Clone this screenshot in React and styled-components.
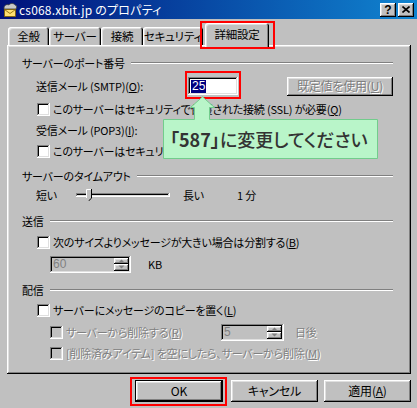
import React from "react";
import styled, { createGlobalStyle } from "styled-components";

const FONT = `"Noto Sans CJK JP", "Liberation Sans", sans-serif`;

const Global = createGlobalStyle`
  html, body { margin: 0; padding: 0; background: #c0c0c0; }
  body { font-family: ${FONT}; }
  * { box-sizing: border-box; }
`;

const raised = `
  box-shadow: inset -1px -1px #000, inset 1px 1px #fff, inset -2px -2px #808080, inset 2px 2px #dfdfdf;
`;
const sunken = `
  box-shadow: inset -1px -1px #fff, inset 1px 1px #808080, inset -2px -2px #dfdfdf, inset 2px 2px #000;
`;

const Win = styled.div`
  position: relative;
  width: 417px;
  height: 408px;
  background: #c0c0c0;
  font-family: ${FONT};
  font-size: 11px;
  letter-spacing: -0.2px;
  font-feature-settings: "palt";
  color: #000;
  overflow: hidden;
  display: flex;
  flex-direction: column;
`;

const TitleBar = styled.div`
  height: 19px;
  flex: none;
  background: linear-gradient(to right, #00107a, #1084d0);
  display: flex;
  align-items: center;
  padding: 0 3px 0 2px;
  color: #fff;
`;

const TitleText = styled.div`
  flex: 1;
  margin-left: 1px;
  font-size: 12px;
  letter-spacing: 0.2px;
  line-height: 19px;
  white-space: nowrap;
`;

const TitleBtn = styled.div`
  width: 16px;
  height: 14px;
  margin-left: ${(p) => p.ml || 0}px;
  background: #c0c0c0;
  ${raised}
  display: flex;
  align-items: center;
  justify-content: center;
  color: #000;
  font-family: "Liberation Sans", sans-serif;
  font-weight: bold;
  font-size: 12px;
  line-height: 12px;
  letter-spacing: 0;
`;

const TabStrip = styled.div`
  height: 26px;
  flex: none;
  display: flex;
  align-items: flex-end;
  padding-left: 8px;
  position: relative;
  z-index: 2;
`;

const Tab = styled.div`
  position: relative;
  width: ${(p) => p.w}px;
  height: ${(p) => (p.active ? 24 : 18)}px;
  margin-left: ${(p) => p.ml || 0}px;
  margin-bottom: ${(p) => (p.active ? -2 : 0)}px;
  background: #c0c0c0;
  border-radius: 3px 3px 0 0;
  box-shadow: inset 1px 1px #fff, inset -1px 0 #000, inset -2px 0 #808080, inset 2px 2px #dfdfdf;
  display: flex;
  justify-content: center;
  padding-top: ${(p) => (p.active ? 4 : 2)}px;
  font-size: 11.5px;
  line-height: 15px;
  white-space: nowrap;

  ${(p) =>
    p.marked &&
    `&::after {
      content: "";
      position: absolute;
      left: -5px; right: -6px; top: -2px; bottom: -2px;
      border: 2px solid #f00;
    }`}
`;

const Panel = styled.div`
  position: relative;
  z-index: 1;
  height: 329px;
  flex: none;
  margin: 0 6px 0 7px;
  ${raised}
  padding: 8px 18px 0 15px;
  display: flex;
  flex-direction: column;
`;

const Header = styled.div`
  display: flex;
  align-items: center;
  height: 20px;
  margin-top: ${(p) => p.mt || 0}px;
  white-space: nowrap;
`;

const Etch = styled.div`
  flex: 1;
  height: 2px;
  margin-left: 6px;
  border-top: 1px solid #808080;
  border-bottom: 1px solid #fff;
`;

const Row = styled.div`
  display: flex;
  align-items: center;
  height: ${(p) => p.h || 20}px;
  margin-top: ${(p) => p.mt || 0}px;
  padding-left: ${(p) => p.indent || 0}px;
  white-space: nowrap;
`;

const Label = styled.span`
  display: inline-block;
  width: ${(p) => (p.w ? `${p.w}px` : "auto")};
  flex: none;
  margin-left: ${(p) => p.ml || 0}px;
  line-height: 14px;
  color: ${(p) => (p.disabled ? "#808080" : "#000")};
  text-shadow: ${(p) => (p.disabled ? "1px 1px #fff" : "none")};
`;

const CheckBox = styled.span`
  width: 13px;
  height: 13px;
  flex: none;
  background: ${(p) => (p.disabled ? "#c0c0c0" : "#fff")};
  ${sunken}
  margin-right: 3px;
`;

const FieldWrap = styled.div`
  position: relative;
  flex: none;
  ${(p) =>
    p.marked &&
    `&::after {
      content: "";
      position: absolute;
      left: -3px; right: -3px; top: -6px; bottom: -4px;
      border: 2px solid #f00;
    }`}
`;

const Field = styled.div`
  width: ${(p) => p.w}px;
  height: ${(p) => p.h || 18}px;
  background: ${(p) => (p.disabled ? "#c0c0c0" : "#fff")};
  ${sunken}
  display: flex;
  align-items: center;
  padding: 0 3px;
  font-family: "Liberation Sans", sans-serif;
  font-size: 12px;
  letter-spacing: 0;
  color: ${(p) => (p.disabled ? "#808080" : "#000")};
`;

const Sel = styled.span`
  background: #000080;
  color: #fff;
  line-height: 13px;
  padding: 0 1px;
`;

const Btn = styled.div`
  position: relative;
  width: ${(p) => p.w}px;
  height: ${(p) => p.h || 22}px;
  flex: none;
  margin-left: ${(p) => (p.ml === "auto" ? "auto" : `${p.ml || 0}px`)};
  background: #c0c0c0;
  ${(p) =>
    p.def
      ? `box-shadow: inset 0 0 0 1px #000, inset -2px -2px #000, inset 2px 2px #fff, inset -3px -3px #808080, inset 3px 3px #dfdfdf;`
      : raised}
  display: flex;
  align-items: center;
  justify-content: center;
  font-size: 12px;
  line-height: 14px;
  color: ${(p) => (p.disabled ? "#808080" : "#000")};
  text-shadow: ${(p) => (p.disabled ? "1px 1px #fff" : "none")};
  white-space: nowrap;

  ${(p) =>
    p.marked &&
    `&::after {
      content: "";
      position: absolute;
      left: -5px; right: -4px; top: -3px; bottom: -4px;
      border: 2px solid #f00;
    }`}
`;

const SliderTrack = styled.div`
  position: relative;
  width: 94px;
  height: 18px;
  flex: none;
  margin-left: ${(p) => p.ml || 0}px;
`;

const Groove = styled.div`
  position: absolute;
  left: 0;
  right: 0;
  top: 7px;
  height: 4px;
  ${sunken}
  background: #c0c0c0;
`;

const Thumb = styled.svg`
  position: absolute;
  left: 10px;
  top: 3px;
`;

const Spin = styled.div`
  display: flex;
  flex: none;
  width: ${(p) => p.w}px;
  height: 17px;
  margin-left: ${(p) => p.ml || 0}px;
  background: #c0c0c0;
  ${sunken}
  padding: 2px;
`;

const SpinText = styled.div`
  flex: 1;
  display: flex;
  align-items: center;
  padding-left: 1px;
  font-family: "Liberation Sans", sans-serif;
  font-size: 12px;
  letter-spacing: 0;
  color: #808080;
`;

const SpinBtns = styled.div`
  width: 15px;
  display: flex;
  flex-direction: column;
`;

const SpinBtn = styled.div`
  flex: 1;
  background: #c0c0c0;
  ${raised}
  display: flex;
  align-items: center;
  justify-content: center;
`;

const ButtonBar = styled.div`
  display: flex;
  padding: 6px 6px 0 0;
  justify-content: flex-end;
`;

const Callout = styled.div`
  position: absolute;
  left: 163px;
  top: 96px;
  width: 216px;
  height: 64px;
  z-index: 5;
`;

const CalloutShape = styled.svg`
  position: absolute;
  left: 0;
  top: 0;
`;

const CalloutText = styled.div`
  position: absolute;
  left: 7px;
  top: 24px;
  height: 38px;
  display: flex;
  align-items: center;
  font-size: 18px;
  font-weight: 500;
  letter-spacing: 0;
  color: #333;
  white-space: nowrap;
  font-feature-settings: "palt";
`;

const Strong = styled.b`
  font-weight: 700;
`;

const Arrow = ({ up }) => (
  <svg width="7" height="4" viewBox="0 0 7 4">
    <path d={up ? "M3.5 0.5 L6.5 3.5 H0.5 Z" : "M0.5 0.5 H6.5 L3.5 3.5 Z"} fill="#808080" />
  </svg>
);

const SpinBox = ({ w, ml, value }) => (
  <Spin w={w} ml={ml}>
    <SpinText>{value}</SpinText>
    <SpinBtns>
      <SpinBtn>
        <Arrow up />
      </SpinBtn>
      <SpinBtn>
        <Arrow />
      </SpinBtn>
    </SpinBtns>
  </Spin>
);

const MailIcon = () => (
  <svg width="16" height="16" viewBox="0 0 16 16">
    <path d="M2 6 C2 3 5 2 7 3 C8 1 12 1 13 3 C15 3 15 6 14 7 L2 7 Z" fill="#c8c8c8" stroke="#404040" strokeWidth="0.8" />
    <rect x="2.5" y="7.5" width="11" height="7" fill="#ffe070" stroke="#806000" strokeWidth="0.8" />
    <path d="M2.5 7.5 L8 11.5 L13.5 7.5" fill="none" stroke="#806000" strokeWidth="0.8" />
  </svg>
);

export default function App() {
  return (
    <>
      <Global />
      <Win>
        <TitleBar>
          <MailIcon />
          <TitleText>cs068.xbit.jp のプロパティ</TitleText>
          <TitleBtn>?</TitleBtn>
          <TitleBtn ml={2}>
            <svg width="8" height="7" viewBox="0 0 8 7">
              <path d="M0.5 0.5 L7.5 6.5 M7.5 0.5 L0.5 6.5" stroke="#000" strokeWidth="1.6" />
            </svg>
          </TitleBtn>
        </TitleBar>

        <TabStrip>
          <Tab w={41}>全般</Tab>
          <Tab w={52}>サーバー</Tab>
          <Tab w={42}>接続</Tab>
          <Tab w={60}>セキュリティ</Tab>
          <Tab w={64} ml={2} active marked>
            詳細設定
          </Tab>
        </TabStrip>

        <Panel>
          <Header>
            サーバーのポート番号
            <Etch />
          </Header>
          <Row h={26} indent={14}>
            <Label w={152}>
              送信メール (SMTP)(<u>O</u>):
            </Label>
            <FieldWrap marked>
              <Field w={50}>
                <Sel>25</Sel>
              </Field>
            </FieldWrap>
            <Btn w={106} h={19} ml="auto" disabled>
              既定値を使用(<u>U</u>)
            </Btn>
          </Row>
          <Row indent={15}>
            <CheckBox />
            <Label>
              このサーバーはセキュリティで保護された接続 (SSL) が必要(<u>Q</u>)
            </Label>
          </Row>
          <Row h={22} indent={14}>
            <Label>
              受信メール (POP3)(<u>I</u>):
            </Label>
          </Row>
          <Row indent={15}>
            <CheckBox />
            <Label>
              このサーバーはセキュリティで保護された接続 (SSL) が必要(<u>C</u>)
            </Label>
          </Row>

          <Header mt={5}>
            サーバーのタイムアウト
            <Etch />
          </Header>
          <Row h={18} indent={14}>
            <Label w={40}>短い</Label>
            <SliderTrack>
              <Groove />
              <Thumb width="6" height="12" viewBox="0 0 6 12">
                <path d="M0 0 H5 V9 L2.5 11.5 L0 9 Z" fill="#c0c0c0" />
                <path d="M0.5 9 V0.5 H5" fill="none" stroke="#fff" />
                <path d="M5.5 0 V9.2 L2.5 12" fill="none" stroke="#000" />
              </Thumb>
            </SliderTrack>
            <Label ml={13} w={54}>長い</Label>
            <Label>1 分</Label>
          </Row>

          <Header mt={7}>
            送信
            <Etch />
          </Header>
          <Row h={22} indent={15}>
            <CheckBox />
            <Label>
              次のサイズよりメッセージが大きい場合は分割する(<u>B</u>)
            </Label>
          </Row>
          <Row h={22} indent={28}>
            <SpinBox w={81} value="60" />
            <Label ml={17}>KB</Label>
          </Row>

          <Header mt={5}>
            配信
            <Etch />
          </Header>
          <Row indent={15}>
            <CheckBox />
            <Label>
              サーバーにメッセージのコピーを置く(<u>L</u>)
            </Label>
          </Row>
          <Row h={24} indent={28}>
            <CheckBox disabled />
            <Label w={155} disabled>
              サーバーから削除する(<u>R</u>)
            </Label>
            <SpinBox w={63} value="5" />
            <Label ml={11} disabled>
              日後
            </Label>
          </Row>
          <Row h={18} indent={28}>
            <CheckBox disabled />
            <Label disabled>
              [削除済みアイテム] を空にしたら、サーバーから削除(<u>M</u>)
            </Label>
          </Row>
        </Panel>

        <ButtonBar>
          <Btn w={88} def marked>
            OK
          </Btn>
          <Btn w={87} ml={8}>
            キャンセル
          </Btn>
          <Btn w={87} ml={6}>
            適用(<u>A</u>)
          </Btn>
        </ButtonBar>

        <Callout>
          <CalloutShape width="216" height="64" viewBox="0 0 216 64">
            <path
              d="M0.5 23.5 H31.5 V11.5 H27.5 L39.5 0.8 L51.5 11.5 H46.5 V23.5 H214.5 V62.5 H0.5 Z"
              fill="#b9f5c9"
              stroke="#72cc8c"
              strokeWidth="1"
            />
          </CalloutShape>
          <CalloutText>
            <Strong>「587」</Strong>に変更してください
          </CalloutText>
        </Callout>
      </Win>
    </>
  );
}
